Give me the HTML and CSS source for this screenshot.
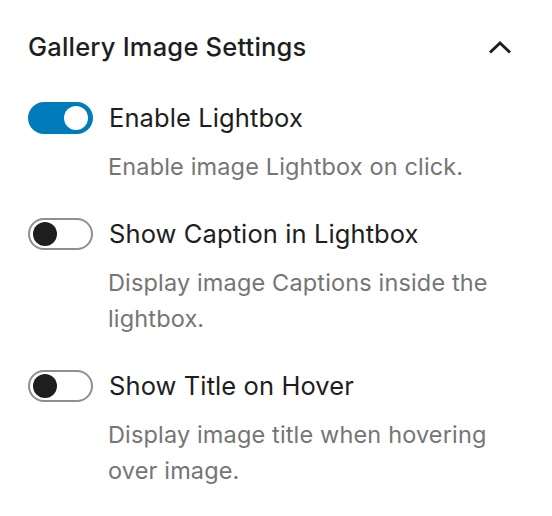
FILE: index.html
```html
<!DOCTYPE html>
<html>
<head>
<meta charset="utf-8">
<link rel="stylesheet" href="styles.css">
</head>
<body>
<div class="panel">
  <div class="header">
    <h2 class="title">Gallery Image Settings</h2>
    <svg class="chevron" width="24" height="14" viewBox="0 0 24 14"><path d="M2 12.5 L12 3 L22 12.5" fill="none" stroke="#1e1e1e" stroke-width="3"/></svg>
  </div>
  <div class="body">
    <div class="field">
      <div class="row">
        <span class="toggle on"><span class="thumb"></span></span>
        <span class="label">Enable Lightbox</span>
      </div>
      <p class="help">Enable image Lightbox on click.</p>
    </div>
    <div class="field">
      <div class="row">
        <span class="toggle"><span class="thumb"></span></span>
        <span class="label">Show Caption in Lightbox</span>
      </div>
      <p class="help">Display image Captions inside the lightbox.</p>
    </div>
    <div class="field">
      <div class="row">
        <span class="toggle"><span class="thumb"></span></span>
        <span class="label">Show Title on Hover</span>
      </div>
      <p class="help">Display image title when hovering over image.</p>
    </div>
  </div>
</div>
</body>
</html>
```
FILE: styles.css
```css
* { box-sizing: border-box; }
html, body { margin: 0; padding: 0; background: #fff; }
body { font-family: Inter, "Noto Sans", sans-serif; color: #1e1e1e; }
.panel { width: 552px; padding: 0 41px 0 28px; }
.header { display: flex; align-items: center; justify-content: space-between; padding-top: 30px; height: 64px; }
.title { margin: 0; font-size: 25.5px; font-weight: 500; line-height: 34px; letter-spacing: 0.2px; }
.chevron { display: block; margin-right: -1px; }
.body { padding-top: 37px; display: flex; flex-direction: column; gap: 32px; }
.row { display: flex; align-items: center; gap: 16px; height: 34px; }
.toggle { position: relative; width: 65px; height: 32px; border-radius: 16px; border: 2px solid #8f8f8f; background: #fff; flex: none; }
.toggle .thumb { position: absolute; top: 2px; left: 3px; width: 24px; height: 24px; border-radius: 50%; background: #1e1e1e; }
.toggle.on { background: #007cba; border-color: #007cba; }
.toggle.on .thumb { left: auto; right: 3px; background: #fff; }
.label { font-size: 25.5px; line-height: 34px; letter-spacing: 0.1px; }
.help { margin: 14px 0 0 80px; font-size: 23.5px; line-height: 36px; letter-spacing: 0.15px; color: #757575; }
```
